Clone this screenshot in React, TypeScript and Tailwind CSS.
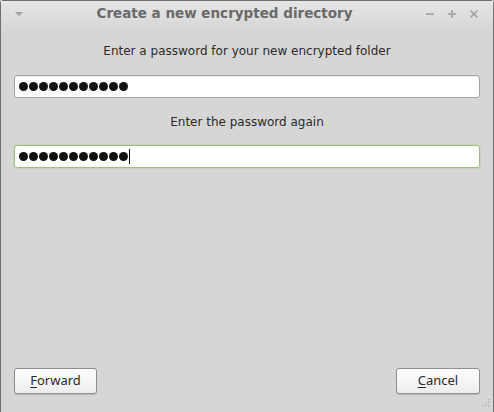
import React from 'react';

const Dots = ({ count }: { count: number }) => (
  <div className="flex items-center gap-[1px]">
    {Array.from({ length: count }).map((_, i) => (
      <span key={i} className="block h-[9px] w-[9px] rounded-full bg-[#111]" />
    ))}
  </div>
);

const App = () => {
  return (
    <div className="relative h-[412px] w-[494px] overflow-hidden bg-[#d6d6d6] font-['DejaVu_Sans',sans-serif]">
      <div className="flex h-full flex-col rounded-t-[4px] border-x border-t border-[#6f6f6f]">
        {/* title bar */}
        <div className="flex h-[25px] items-center bg-gradient-to-b from-[#e6e6e6] to-[#d8d8d8] px-[12px]">
          <svg width="10" height="6" viewBox="0 0 10 6" className="ml-[1px]">
            <path d="M1 1h8L5 5z" fill="#a0a0a0" />
          </svg>
          <div className="flex-1 text-center text-[13.5px] font-bold text-[#6a6a6a]">
            Create a new encrypted directory
          </div>
          <div className="flex items-center gap-[12px] pr-[2px]">
            <svg width="10" height="10" viewBox="0 0 10 10">
              <path d="M1 5h8" stroke="#a0a0a0" strokeWidth="1.6" />
            </svg>
            <svg width="10" height="10" viewBox="0 0 10 10">
              <path d="M1 5h8M5 1v8" stroke="#a0a0a0" strokeWidth="1.6" />
            </svg>
            <svg width="10" height="10" viewBox="0 0 10 10">
              <path d="M1.5 1.5l7 7M8.5 1.5l-7 7" stroke="#a0a0a0" strokeWidth="1.6" />
            </svg>
          </div>
        </div>

        {/* body */}
        <div className="flex flex-1 flex-col px-[13px]">
          <div className="mt-[16px] text-center text-[12px] text-[#2b2b2b]">
            Enter a password for your new encrypted folder
          </div>
          <div className="mt-[15px] flex h-[23px] items-center rounded-[3px] border border-[#a3a3a3] bg-white px-[4px] shadow-[inset_0_1px_1px_rgba(0,0,0,0.08)]">
            <Dots count={11} />
          </div>
          <div className="mt-[15px] text-center text-[12px] text-[#2b2b2b]">
            Enter the password again
          </div>
          <div className="mt-[14px] flex h-[23px] items-center rounded-[3px] border border-[#9fbf7a] bg-white px-[4px] shadow-[0_0_0_1px_rgba(160,200,120,0.25)]">
            <Dots count={11} />
            <span className="ml-[1px] block h-[15px] w-[1px] bg-black" />
          </div>

          <div className="flex-1" />

          <div className="mb-[18px] flex items-center justify-between font-['Noto_Sans',sans-serif] text-[13px] text-[#2a2a2a]">
            <button className="h-[26px] w-[83px] rounded-[3px] border border-[#8e8e8e] bg-gradient-to-b from-white to-[#ececec] shadow-[0_1px_1px_rgba(0,0,0,0.15)]">
              <span className="underline decoration-1 underline-offset-2">F</span>orward
            </button>
            <button className="h-[26px] w-[84px] rounded-[3px] border border-[#8e8e8e] bg-gradient-to-b from-white to-[#ececec] shadow-[0_1px_1px_rgba(0,0,0,0.15)]">
              <span className="underline decoration-1 underline-offset-2">C</span>ancel
            </button>
          </div>
        </div>
      </div>
      <svg width="10" height="10" viewBox="0 0 10 10" className="absolute bottom-[3px] right-[4px]">
        <g fill="#b4b4b4">
          <rect x="8" y="0" width="1.5" height="1.5" />
          <rect x="5" y="3" width="1.5" height="1.5" />
          <rect x="8" y="3" width="1.5" height="1.5" />
          <rect x="2" y="6" width="1.5" height="1.5" />
          <rect x="5" y="6" width="1.5" height="1.5" />
          <rect x="8" y="6" width="1.5" height="1.5" />
        </g>
      </svg>
    </div>
  );
};

export default App;
